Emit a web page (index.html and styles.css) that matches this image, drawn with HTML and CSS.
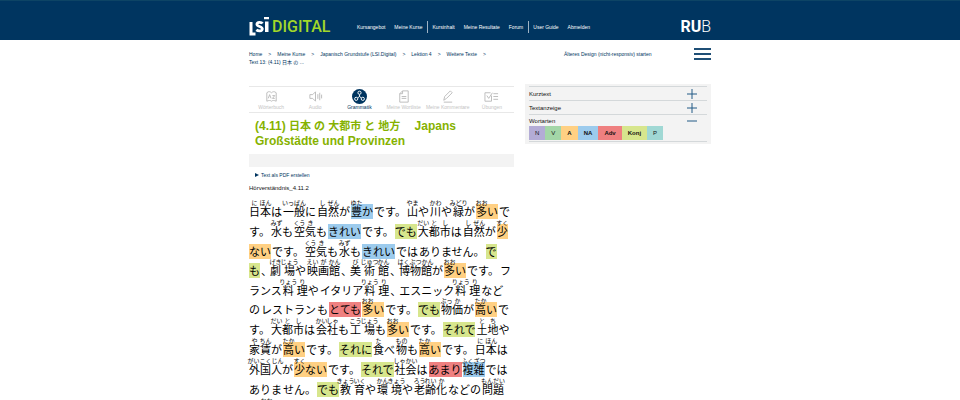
FILE: index.html
```html
<!DOCTYPE html>
<html lang="de">
<head>
<meta charset="utf-8">
<title>LSI.Digital – Japanisch Grundstufe</title>
<link rel="stylesheet" href="styles.css">
</head>
<body>
<header class="top">
  <div class="wrap top-row">
    <a class="logo" href="#"><svg class="logo-bars" viewBox="0 0 21 19" width="21" height="19" aria-hidden="true"><path d="M2 5V17H6.500" fill="none" stroke="#fff" stroke-width="3"/><path d="M13.500 6.500C12.500 5 8 4.600 7.900 7.300c0 2.700 5.600 1.800 5.400 4.700-.2 2.600-4.200 2.300-6 .8" fill="none" stroke="#fff" stroke-width="2.800"/><path d="M15 0h5v2.300h-5zM16 4.500h3.500V15H16z" fill="#fff"/></svg><span class="logo-word">DIGITAL</span></a>
    <nav class="nav">
      <a href="#">Kursangebot</a><a href="#">Meine Kurse</a><a class="split" href="#">Kursinhalt</a><a href="#">Meine Resultate</a><a href="#">Forum</a><a class="split" href="#">User Guide</a><a href="#">Abmelden</a>
    </nav>
    <a class="rub" href="#"><b>RU</b>B</a>
  </div>
</header>
<div class="wrap crumbs-row">
  <nav class="crumbs">
    <a href="#">Home</a><span>&gt;</span><a href="#">Meine Kurse</a><span>&gt;</span><a href="#">Japanisch Grundstufe (LSI.Digital)</a><span>&gt;</span><a href="#">Lektion 4</a><span>&gt;</span><a href="#">Weitere Texte</a><span>&gt;</span><a href="#">Text 13: (4.11) 日本 の ...</a>
  </nav>
  <a class="old" href="#">Älteres Design (nicht-responsiv) starten</a>
  <button class="burger" type="button" aria-label="Menü"><i></i><i></i><i></i></button>
</div>
<div class="wrap page">
  <main>
    <nav class="tabs">
      <a href="#"><svg viewBox="0 0 16 16"><path d="M3 4c2-2 4-1 5 0 1-1 3-2 5 0v9c-2-1-4-1-5 0-1-1-3-1-5 0zM4.500 10L6 6l1.500 4M9 7h2.500L9 10h2.500"/></svg>Wörterbuch</a>
      <a href="#"><svg viewBox="0 0 16 16"><path d="M2 6h3l3-3v10l-3-3H2zM10.500 5.500v5M12.500 4v8M14.500 6v4"/></svg>Audio</a>
      <a class="on" href="#"><svg viewBox="0 0 16 16"><circle cx="8" cy="8" r="8" fill="#003560" stroke="none"/><circle cx="8" cy="4" r="1.700"/><circle cx="4.500" cy="10.500" r="1.700"/><circle cx="11.500" cy="10.500" r="1.700"/><path d="M8 6v2L6 9.500M8 8l2 1.500"/></svg>Grammatik</a>
      <a href="#"><svg viewBox="0 0 16 16"><path d="M4 5l3-3h6v12H4zM4 5h3V2M6 8h5M6 10h5"/></svg>Meine Wortliste</a>
      <a href="#"><svg viewBox="0 0 16 16"><path d="M4 12l1-4 6-6 2 2-6 6zM4 14h9"/></svg>Meine Kommentare</a>
      <a href="#"><svg viewBox="0 0 16 16"><path d="M8 7v6H1V4h6M3 7l2 3 4-6M10 5h5M10 8h5M10 11h5"/></svg>Übungen</a>
    </nav>
    <h1>(4.11) <span lang="ja">日本 の 大都市 と 地方　</span> Japans Großstädte und Provinzen</h1>
    <div class="bar"></div>
    <a class="pdf" href="#">Text als PDF erstellen</a>
    <p class="ref">Hörverständnis_4.11.2</p>
    <article class="text" lang="ja">
      <p><span><ruby>日<rt>に</rt></ruby><ruby>本<rt>ほん</rt></ruby>は</span><span><ruby>一般<rt>いっぱん</rt></ruby>に</span><span><ruby>自<rt>し</rt></ruby><ruby>然<rt>ぜん</rt></ruby>が</span><mark class="na"><ruby>豊<rt>ゆた</rt></ruby>か</mark><span>です。</span><span><ruby>山<rt>やま</rt></ruby>や</span><span><ruby>川<rt>かわ</rt></ruby>や</span><span><ruby>緑<rt>みどり</rt></ruby>が</span><mark class="a"><ruby>多<rt>おお</rt></ruby>い</mark><span>で</span></p>
      <p><span>す。</span><span><ruby>水<rt>みず</rt></ruby>も</span><span><ruby>空<rt>くう</rt></ruby><ruby>気<rt>き</rt></ruby>も</span><mark class="na">きれい</mark><span>です。</span><mark class="konj">でも</mark><span><ruby>大<rt>だい</rt></ruby><ruby>都<rt>と</rt></ruby><ruby>市<rt>し</rt></ruby>は</span><span><ruby>自<rt>し</rt></ruby><ruby>然<rt>ぜん</rt></ruby>が</span><mark class="a"><ruby>少<rt>すく</rt></ruby></mark></p>
      <p class="tight"><mark class="a">ない</mark><span>です。</span><span><ruby>空<rt>くう</rt></ruby><ruby>気<rt>き</rt></ruby>も</span><span><ruby>水<rt>みず</rt></ruby>も</span><mark class="na">きれい</mark><span>では</span><span>ありません。</span><mark class="konj">で</mark></p>
      <p><mark class="konj">も</mark><span class="comma">、</span><span><ruby class="wide">劇<rt>げき</rt></ruby><ruby>場<rt>じょう</rt></ruby>や</span><span><ruby>映<rt>えい</rt></ruby><ruby>画<rt>が</rt></ruby><ruby>館<rt>かん</rt></ruby></span><span class="comma">、</span><span><ruby class="wide">美<rt>び</rt></ruby><ruby class="wide">術<rt>じゅつ</rt></ruby><ruby>館<rt>かん</rt></ruby></span><span class="comma">、</span><span><ruby>博物館<rt>はくぶつかん</rt></ruby>が</span><mark class="a"><ruby>多<rt>おお</rt></ruby>い</mark><span>です。</span><span>フ</span></p>
      <p class="tight"><span>ランス</span><span><ruby class="wide">料<rt>りょう</rt></ruby><ruby>理<rt>り</rt></ruby>や</span><span>イタリア</span><span><ruby class="wide">料<rt>りょう</rt></ruby><ruby>理<rt>り</rt></ruby></span><span class="comma">、</span><span>エスニック</span><span><ruby class="wide">料<rt>りょう</rt></ruby><ruby>理<rt>り</rt></ruby></span><span>など</span></p>
      <p><span>の</span><span>レストラン</span><span>も</span><mark class="adv">とても</mark><mark class="a"><ruby>多<rt>おお</rt></ruby>い</mark><span>です。</span><mark class="konj">でも</mark><span><ruby>物<rt>ぶっ</rt></ruby><ruby>価<rt>か</rt></ruby>が</span><mark class="a"><ruby>高<rt>たか</rt></ruby>い</mark><span>で</span></p>
      <p><span>す。</span><span><ruby>大<rt>だい</rt></ruby><ruby>都<rt>と</rt></ruby><ruby>市<rt>し</rt></ruby>は</span><span><ruby>会<rt>かい</rt></ruby><ruby>社<rt>しゃ</rt></ruby>も</span><span><ruby class="wide">工<rt>こう</rt></ruby><ruby>場<rt>じょう</rt></ruby>も</span><mark class="a"><ruby>多<rt>おお</rt></ruby>い</mark><span>です。</span><mark class="konj">それで</mark><span><ruby>土<rt>と</rt></ruby><ruby>地<rt>ち</rt></ruby>や</span></p>
      <p><span><ruby>家<rt>や</rt></ruby><ruby>賃<rt>ちん</rt></ruby>が</span><mark class="a"><ruby>高<rt>たか</rt></ruby>い</mark><span>です。</span><mark class="konj">それに</mark><span><ruby>食<rt>た</rt></ruby>べ</span><span><ruby>物<rt>もの</rt></ruby>も</span><mark class="a"><ruby>高<rt>たか</rt></ruby>い</mark><span>です。</span><span><ruby>日<rt>に</rt></ruby><ruby>本<rt>ほん</rt></ruby>は</span></p>
      <p><span><ruby>外国人<rt>がいこくじん</rt></ruby>が</span><mark class="a"><ruby>少<rt>すく</rt></ruby>ない</mark><span>です。</span><mark class="konj">それで</mark><span><ruby>社会<rt>しゃかい</rt></ruby>は</span><mark class="adv">あまり</mark><mark class="na"><ruby>複雑<rt>ふくざつ</rt></ruby></mark><span>では</span></p>
      <p><span>ありま</span><span>せん。</span><mark class="konj">でも</mark><span><ruby class="wide">教<rt>きょう</rt></ruby><ruby>育<rt>いく</rt></ruby>や</span><span><ruby class="wide">環<rt>かん</rt></ruby><ruby>境<rt>きょう</rt></ruby>や</span><span><ruby>老<rt>ろう</rt></ruby><ruby>齢<rt>れい</rt></ruby><ruby>化<rt>か</rt></ruby></span><span>などの</span><span><ruby>問題<rt>もんだい</rt></ruby></span></p>
      <p><span>が</span><mark class="a"><ruby>多<rt>おお</rt></ruby>い</mark><span>です。</span></p>
    </article>
  </main>
  <aside class="side">
    <button type="button">Kurztext<svg viewBox="0 0 12 12"><path d="M1 6h10M6 1v10"/></svg></button>
    <button type="button">Textanzeige<svg viewBox="0 0 12 12"><path d="M1 6h10M6 1v10"/></svg></button>
    <button class="open" type="button">Wortarten<svg viewBox="0 0 12 12"><path d="M1 6h10"/></svg></button>
    <ul class="legend"><li class="n">N</li><li class="v">V</li><li class="a">A</li><li class="na">NA</li><li class="adv">Adv</li><li class="konj">Konj</li><li class="p">P</li></ul>
  </aside>
</div>
</body>
</html>
```
FILE: styles.css
```css
* { box-sizing: border-box; }
body {
  margin: 0;
  overflow: hidden;
  background: #fff;
  color: #111;
  font: 6px/8px "Liberation Sans", "Noto Sans CJK JP", sans-serif;
}
a { color: inherit; text-decoration: none; }
button { border: 0; padding: 0; background: none; color: inherit; font: inherit; }
.wrap { max-width: 462px; margin: 0 auto; }

.top { background: #003560; color: #fff; border-top: 1px solid #0d4465; }
.top-row { display: flex; height: 39px; padding-top: 15px; align-items: flex-start; }
.logo { display: flex; width: 108px; gap: 2px; padding-top: 1px; }
.logo-word { font: 500 16px/20px Roboto, sans-serif; color: #a2d729; }
.nav { display: flex; font-size: 5px; line-height: 12px; padding-top: 5px; flex: 1; }
.nav a { margin-right: 9px; white-space: nowrap; }
.nav .split { margin-left: -4px; border-left: 1px solid #9fb3c4; padding-left: 4px; }
.rub { font: 300 16px/20px Roboto, sans-serif; padding-top: 1px; }
.rub b { font-weight: 700; }

.crumbs-row { display: flex; padding-top: 8px; height: 44px; align-items: flex-start; color: #003560; font-size: 5px; line-height: 8px; }
.crumbs { width: 262px; padding-top: 2px; display: flex; flex-wrap: wrap; }
.crumbs span { margin: 0 6px; }
.old { margin-left: 53px; padding-top: 2px; }
.burger { margin-left: auto; display: grid; gap: 3px; width: 17px; }
.burger i { height: 2px; background: #1f4f76; }

.page { display: grid; grid-template-columns: 265fr 186fr; column-gap: 11px; align-items: start; }
main { padding-top: 2px; min-width: 0; }
.tabs { display: grid; grid-template-columns: repeat(6, 1fr); border: solid #e8e8e8; border-width: 1px 0; height: 27px; padding-top: 2px; }
.tabs a { display: flex; flex-direction: column; align-items: center; font-size: 5px; line-height: 7px; color: #c4c4c4; white-space: nowrap; }
.tabs svg { width: 15px; height: 15px; fill: none; stroke: #bbb; stroke-width: 1; }
.tabs .on { color: #003560; }
.tabs .on svg { stroke: #fff; }
h1 { margin: 6px 6px 5px; font: 700 12px/15px "Liberation Sans", "Noto Sans CJK JP", sans-serif; color: #86b200; }
h1 span { font-size: 11px; line-height: 1; }
.bar { height: 13px; background: #f3f3f3; }
.pdf { display: block; margin: 4px 6px; font-size: 5px; color: #003560; }
.pdf::before { content: ""; display: inline-block; border: solid transparent; border-width: 2px 0 2px 4px; border-left-color: #003560; margin-right: 2px; }
.ref { margin: 5px 0 0; }

.text { font: 400 11px/15px "Noto Sans CJK JP", sans-serif; padding-top: 12px; color: #000; }
.text p { display: flex; gap: 1px; margin: 0; height: 20px; white-space: nowrap; align-items: flex-start; }
.text .tight { height: 19px; }
mark { color: inherit; }
ruby { display: inline-block; position: relative; }
rt { display: block; position: absolute; bottom: 13px; left: 50%; transform: translateX(-50%); font-size: 6px; line-height: 6px; white-space: nowrap; }
.wide { margin-right: 3px; }
.comma { width: 8px; }

.side { background: #f3f3f3; padding: 2px 4px; height: 60px; }
.side button { display: flex; justify-content: space-between; align-items: center; width: 100%; height: 14px; padding: 0 9px 0 0; border-top: 1px solid #d4d8da; }
.side .open { height: 12px; }
.side svg { width: 12px; height: 12px; fill: none; stroke: #235a86; stroke-width: 1; }
.legend { display: flex; margin: 0; padding: 0 0 1px; list-style: none; font-weight: 700; border-bottom: 1px solid #d4d8da; }
.legend li { padding: 0 6px; line-height: 14px; }
.legend .n, .legend .v, .legend .p { font-weight: 400; }
.n { background: #b3acd6; }
.v { background: #a3d6a7; }
.a { background: #ffd083; }
.na { background: #9ccbed; }
.adv { background: #ef8080; }
.konj { background: #d7e68d; }
.p { background: #a0d8d4; }
```
